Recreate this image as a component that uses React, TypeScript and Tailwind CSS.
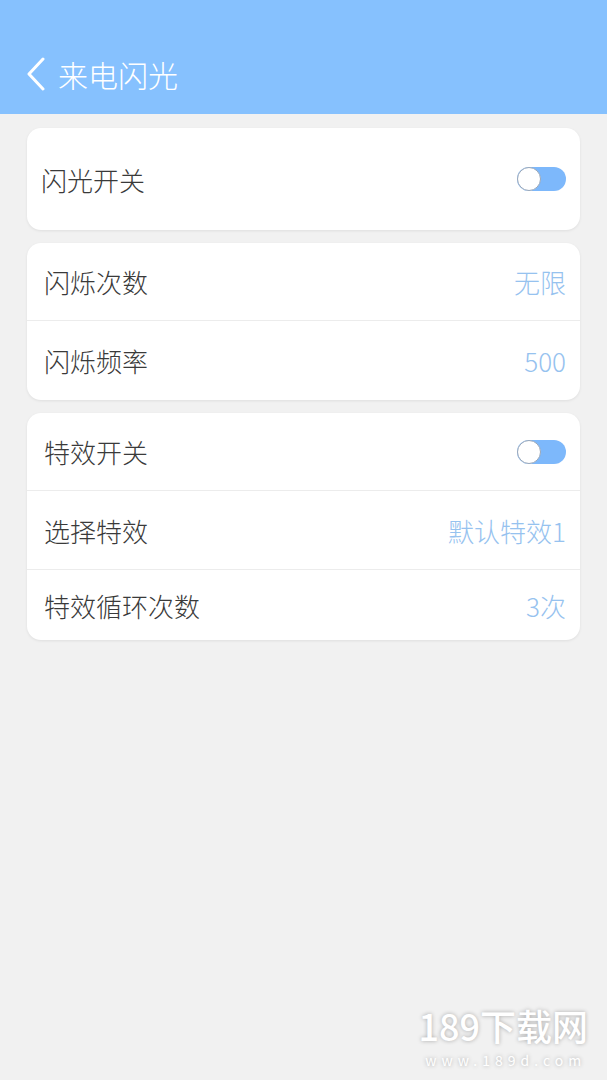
const font = { fontFamily: '"Noto Sans CJK SC", "Noto Sans", sans-serif' };

const Toggle = () => (
  <div className="relative h-[24px] w-[49px] rounded-full bg-[#7db8fb]">
    <div className="absolute left-0 top-0 h-[24px] w-[24px] rounded-full border border-[#9aa7b8] bg-white" />
  </div>
);

const Row = ({
  label,
  value,
  toggle,
  h,
  last,
}: {
  label: string;
  value?: string;
  toggle?: boolean;
  h: string;
  last?: boolean;
}) => (
  <div
    className={`flex items-center justify-between pl-[17px] pr-[14px] ${h} ${
      last ? "" : "border-b border-[#ececec]"
    }`}
  >
    <span className="text-[26px] font-light text-[#3a3a3a]">{label}</span>
    {toggle ? (
      <Toggle />
    ) : (
      <span className="text-[26px] font-light text-[#96c2ef]">{value}</span>
    )}
  </div>
);

const App = () => {
  return (
    <div className="relative min-h-[1080px] w-full bg-[#f1f1f1]" style={font}>
      <div className="flex h-[114px] items-end bg-[#86c1fe] pb-[20px] pl-[26px]">
        <svg width="20" height="34" viewBox="0 0 20 34" className="mb-[3px]">
          <path
            d="M17 2 L3 17 L17 32"
            fill="none"
            stroke="white"
            strokeWidth="3"
            strokeLinecap="round"
            strokeLinejoin="round"
          />
        </svg>
        <span className="ml-[12px] text-[30px] font-light leading-[40px] text-white">
          来电闪光
        </span>
      </div>

      <div className="flex flex-col gap-[13px] px-[27px] pt-[14px]">
        <div className="rounded-[14px] bg-white shadow-[0_1px_3px_rgba(0,0,0,0.08)]">
          <div className="flex h-[102px] items-center justify-between pl-[14px] pr-[14px]">
            <span className="text-[26px] font-light text-[#3a3a3a]">闪光开关</span>
            <Toggle />
          </div>
        </div>

        <div className="overflow-hidden rounded-[14px] bg-white shadow-[0_1px_3px_rgba(0,0,0,0.08)]">
          <Row label="闪烁次数" value="无限" h="h-[78px]" />
          <Row label="闪烁频率" value="500" h="h-[79px]" last />
        </div>

        <div className="overflow-hidden rounded-[14px] bg-white shadow-[0_1px_3px_rgba(0,0,0,0.08)]">
          <Row label="特效开关" toggle h="h-[78px]" />
          <Row label="选择特效" value="默认特效1" h="h-[79px]" />
          <Row label="特效循环次数" value="3次" h="h-[70px]" last />
        </div>
      </div>

      <div className="absolute bottom-[11px] right-[19px] flex flex-col items-center whitespace-nowrap text-white [text-shadow:0_0_4px_rgba(0,0,0,0.3)]">
        <span className="text-[36px] font-medium leading-[52px]">189下载网</span>
        <span className="pl-[5px] text-[14px] leading-[18px] tracking-[5px]">
          www.189d.com
        </span>
      </div>
    </div>
  );
};

export default App;
